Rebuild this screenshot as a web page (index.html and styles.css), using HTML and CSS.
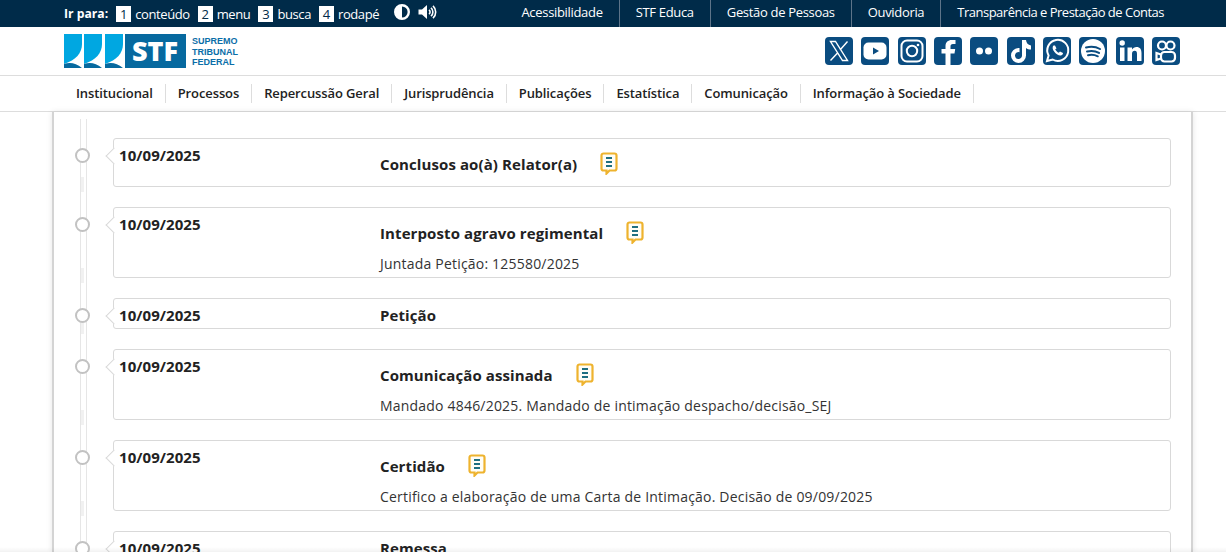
FILE: index.html
```html
<!DOCTYPE html>
<html lang="pt-BR">
<head>
<meta charset="utf-8">
<title>STF</title>
<link rel="stylesheet" href="styles.css">
</head>
<body>
<svg class="defs" width="0" height="0" aria-hidden="true"><defs>
<symbol id="note" viewBox="0 0 18 23">
<path d="M3.500 1.500h11a2 2 0 0 1 2 2v13a2 2 0 0 1-2 2h-5l-3 3v-3h-3a2 2 0 0 1-2-2v-13a2 2 0 0 1 2-2z" fill="#fffdf6" stroke="#eeb32e" stroke-width="2.200"/>
<path d="M6 6h6M6 10h6M6 14h6" stroke="#1f6f80" stroke-width="2.200"/>
</symbol>
</defs></svg>
<div class="topbar">
  <div class="skip">
    <b class="skip-label">Ir para:</b>
    <span class="skip-item"><i>1</i>conteúdo</span>
    <span class="skip-item"><i>2</i>menu</span>
    <span class="skip-item"><i>3</i>busca</span>
    <span class="skip-item"><i>4</i>rodapé</span>
    <svg class="contrast" width="16" height="16" viewBox="0 0 16 16"><circle cx="8" cy="8" r="6.800" fill="#002b49" stroke="#fff" stroke-width="2.400"/><path d="M8 1.200a6.800 6.800 0 0 0 0 13.600z" fill="#fff"/></svg>
    <svg class="audio" width="19" height="16" viewBox="0 0 19 16"><path d="M.5 5.500h3.500l5-4.500v14l-5-4.500H.5z" fill="#fff"/><path d="M11 5.800a2.800 2.800 0 0 1 0 4.400M13 3.800a5.600 5.600 0 0 1 0 8.400M15 1.800a8.500 8.500 0 0 1 0 12.400" fill="none" stroke="#fff" stroke-width="1.600"/></svg>
  </div>
  <nav class="toplinks">
    <a>Acessibilidade</a><a>STF Educa</a><a>Gestão de Pessoas</a><a>Ouvidoria</a><a class="toplink-long">Transparência e Prestação de Contas</a>
  </nav>
</div>
<header class="brand">
  <div class="logo">
    <svg class="logo-mark" width="122" height="34" viewBox="0 0 122 34">
      <path d="M0 0h18v10c0 9-6 16-18 20z" fill="#00a7e1"/><path d="M20 0h18v10c0 9-6 16-18 20z" fill="#00a7e1"/><path d="M41 0h18v10c0 9-6 16-18 20z" fill="#00a7e1"/>
      <path d="M0 34v-4c6-2 12-1 18 4zM20 34v-4c6-2 12-1 18 4zM41 34v-4c6-2 12-1 18 4z" fill="#06699f"/>
      <rect x="61" width="61" height="34" fill="#06699f"/>
      <text x="91" y="27" class="logo-stf" text-anchor="middle">STF</text>
    </svg>
    <div class="logo-text">SUPREMO<br>TRIBUNAL<br>FEDERAL</div>
  </div>
  <div class="social">
    <a class="soc"><svg viewBox="0 0 28 28"><path d="M5.500 4.500h5l12 19h-5zM22.500 4.500l-7.500 8.500M13 15.500 5.500 23.500" fill="none" stroke="#fff" stroke-width="1.400"/></svg></a>
    <a class="soc"><svg viewBox="0 0 28 28"><rect x="2.500" y="5.500" width="23" height="17" rx="5" fill="#fff"/><path d="M12 10.500v7l6-3.500z" fill="#0a4c80"/></svg></a>
    <a class="soc"><svg viewBox="0 0 28 28"><rect x="3.500" y="3.500" width="21" height="21" rx="5.500" fill="none" stroke="#fff" stroke-width="2"/><circle cx="14" cy="14" r="5.200" fill="none" stroke="#fff" stroke-width="2"/><circle cx="20" cy="8" r="1.300" fill="#fff"/></svg></a>
    <a class="soc"><svg viewBox="0 0 28 28"><path d="M16.500 28V16.500h4l.7-4.500h-4.700V9.500c0-1.500.6-2.500 2.500-2.500H21.500V3h-3.800C14 3 11.500 5.300 11.500 9v3h-4v4.500h4V28z" fill="#fff"/></svg></a>
    <a class="soc"><svg viewBox="0 0 28 28"><circle cx="9.500" cy="14" r="3.500" fill="#fff"/><circle cx="18.500" cy="14" r="3.500" fill="#fff"/></svg></a>
    <a class="soc"><svg viewBox="0 0 28 28"><path d="M15 3h4c.3 3 2 5 5 5.500v4c-2 0-3.700-.6-5-1.600V18.500a7.500 7.500 0 1 1-7.500-7.500l1 .1v4.100a3.500 3.500 0 1 0 2.500 3.300z" fill="#fff"/></svg></a>
    <a class="soc"><svg viewBox="0 0 28 28"><path d="M4 24l1.600-5.600A10.500 10.500 0 1 1 9.700 22.500z" fill="none" stroke="#fff" stroke-width="2"/><path d="M10.500 8.500c-1.500 1.500-1 4 1 6.500s4.500 4 6.500 3.500c1.500-.4 2-1.500 2-2.500l-3-1.500-1.200 1.300c-1.500-.6-3-2.200-3.600-3.600L13.500 11.500 12 8.500z" fill="#fff"/></svg></a>
    <a class="soc"><svg viewBox="0 0 28 28"><circle cx="14" cy="14" r="12" fill="#fff"/><path d="M7 10.500c5-1.300 10-.8 14 1.500M8 14.500c4-1 8.500-.6 12 1.400M9 18.200c3.500-.8 6.800-.4 9.800 1.100" fill="none" stroke="#0a4c80" stroke-width="2" stroke-linecap="round"/></svg></a>
    <a class="soc"><svg viewBox="0 0 28 28"><rect x="4" y="10.500" width="4.500" height="13.500" fill="#fff"/><circle cx="6.200" cy="6" r="2.700" fill="#fff"/><path d="M11.500 10.500H16v2c1-1.500 2.500-2.400 4.500-2.400 3.500 0 5 2.200 5 6V24H21v-7c0-2-.6-3.200-2.300-3.200S16 15 16 17v7h-4.500z" fill="#fff"/></svg></a>
    <a class="soc"><svg viewBox="0 0 28 28"><g fill="none" stroke="#fff" stroke-width="2.200"><circle cx="10" cy="8.500" r="4"/><circle cx="18.500" cy="8.500" r="4"/><rect x="9" y="15" width="14" height="9.500" rx="3.500"/><path d="M9 17.500 4.500 16v7L9 21.500"/></g></svg></a>
  </div>
</header>
<nav class="mainnav">
  <a>Institucional</a><a>Processos</a><a>Repercussão Geral</a><a>Jurisprudência</a><a>Publicações</a><a>Estatística</a><a>Comunicação</a><a>Informação à Sociedade</a>
</nav>
<main class="panel">
  <article class="item">
    <span class="dot"></span>
    <div class="card"><div class="date">10/09/2025</div><div class="body"><h3 class="ev">Conclusos ao(à) Relator(a)<svg class="note"><use href="#note"/></svg></h3></div></div>
  </article>
  <article class="item">
    <span class="dot"></span>
    <div class="card"><div class="date">10/09/2025</div><div class="body"><h3 class="ev">Interposto agravo regimental<svg class="note"><use href="#note"/></svg></h3><p class="desc">Juntada Petição: 125580/2025</p></div></div>
  </article>
  <article class="item">
    <span class="dot"></span>
    <div class="card card-plain"><div class="date">10/09/2025</div><div class="body"><h3 class="ev">Petição</h3></div></div>
  </article>
  <article class="item">
    <span class="dot"></span>
    <div class="card"><div class="date">10/09/2025</div><div class="body"><h3 class="ev">Comunicação assinada<svg class="note"><use href="#note"/></svg></h3><p class="desc">Mandado 4846/2025. Mandado de intimação despacho/decisão_SEJ</p></div></div>
  </article>
  <article class="item">
    <span class="dot"></span>
    <div class="card"><div class="date">10/09/2025</div><div class="body"><h3 class="ev">Certidão<svg class="note"><use href="#note"/></svg></h3><p class="desc">Certifico a elaboração de uma Carta de Intimação. Decisão de 09/09/2025</p></div></div>
  </article>
  <article class="item">
    <span class="dot"></span>
    <div class="card card-plain"><div class="date">10/09/2025</div><div class="body"><h3 class="ev">Remessa</h3></div></div>
  </article>
</main>
</body>
</html>
```
FILE: styles.css
```css
* { box-sizing: border-box; }
html, body { margin: 0; height: 552px; overflow: hidden; background: #fff; }
body { font-family: "Open Sans", sans-serif; color: #222; position: relative; }
body::after { content: ""; position: absolute; left: 0; right: 0; bottom: 0; height: 5px; background: linear-gradient(rgba(0,0,0,0), rgba(0,0,0,.05)); }
.defs { position: absolute; }
.topbar { height: 27px; background: #002b49; color: #fff; padding: 0 46px 0 64px; display: flex; justify-content: space-between; align-items: center; font-size: 13px; }
.skip { display: flex; align-items: center; }
.skip-label { margin-right: 8px; font-size: 12.200px; }
.skip-item { display: flex; align-items: center; margin-right: 8px; letter-spacing: -.4px; }
.skip-item i { font-style: normal; width: 15px; height: 16px; background: #fff; color: #002b49; text-align: center; line-height: 16px; margin-right: 4px; letter-spacing: 0; }
.contrast { margin-left: 7px; margin-top: -3px; }
.audio { margin-left: 8px; margin-top: -3px; }
.toplinks { display: flex; }
.toplinks a { height: 27px; line-height: 25px; padding: 0 16px; border-left: 1px solid #5d7489; letter-spacing: -.32px; }
.toplinks a:first-child { border-left: 0; }
.toplinks .toplink-long { letter-spacing: -.5px; }
.brand { height: 49px; border-bottom: 1px solid #ddd; padding: 0 46px 0 64px; display: flex; justify-content: space-between; align-items: center; }
.logo { display: flex; align-items: center; }
.logo-mark { display: block; overflow: visible; }
.logo-stf { font: 800 27px "Open Sans", sans-serif; fill: #fff; }
.logo-text { margin: 2px 0 0 6px; font-family: "Liberation Sans", sans-serif; font-size: 9px; line-height: 10.400px; font-weight: 700; color: #0b6ea8; }
.social { display: flex; gap: 8.330px; }
.soc { width: 28px; height: 28px; border-radius: 4px; background: #0a4c80; overflow: hidden; display: block; }
.soc svg { display: block; width: 28px; height: 28px; }
.mainnav { height: 36px; border-bottom: 1px solid #ddd; padding: 8px 0 0 64px; display: flex; align-items: flex-start; }
.mainnav a { font-size: 13px; font-weight: 600; color: #222; line-height: 19px; padding: 0 12px; border-right: 1px solid #ddd; letter-spacing: -.11px; }
.panel { width: 1141px; height: 441px; margin-left: 52px; border-left: 2px solid #d4d4d4; border-right: 2px solid #d4d4d4; padding: 26px 20px 0 0; display: flex; flex-direction: column; gap: 20px; position: relative; overflow: hidden; box-shadow: 0 0 6px rgba(0,0,0,.1); }
.panel::before { content: ""; position: absolute; left: 26px; top: 7px; bottom: 0; width: 5px; border-left: 1px solid #e6e6e6; border-right: 1px solid #e6e6e6; }
.item { display: flex; padding-left: 59px; position: relative; flex: none; }
.item::after { content: ""; position: absolute; left: 27px; bottom: -5px; width: 3px; height: 15px; background: #f1f1f1; }
.dot { position: absolute; left: 21px; top: 10px; width: 15px; height: 15px; border-radius: 50%; border: 2px solid #c2c2c2; background: #fff; z-index: 1; }
.card { flex: 1; display: flex; min-height: 49px; border: 1px solid #d9d9d9; border-radius: 3px; padding: 6px 0 4px 5px; position: relative; background: #fff; }
.card::before { content: ""; position: absolute; left: -6px; top: 11px; width: 11px; height: 11px; background: #fff; border-left: 1px solid #d9d9d9; border-bottom: 1px solid #d9d9d9; transform: rotate(45deg); }
.card-plain { min-height: 31px; padding-bottom: 3px; }
.date { width: 261px; font-size: 15px; font-weight: 700; line-height: 20px; flex: none; position: relative; letter-spacing: .06px; }
.body { flex: 1; }
.ev { margin: 0; font-size: 15px; font-weight: 700; line-height: 20px; padding-top: 9px; display: flex; align-items: center; letter-spacing: .1px; }
.card-plain .ev { padding-top: 0; }
.note { width: 18px; height: 23px; margin: -2px 0 -1px 23px; flex: none; }
.desc { margin: 11px 0 0; font-size: 14px; line-height: 19px; color: #333; letter-spacing: .2px; }
```
